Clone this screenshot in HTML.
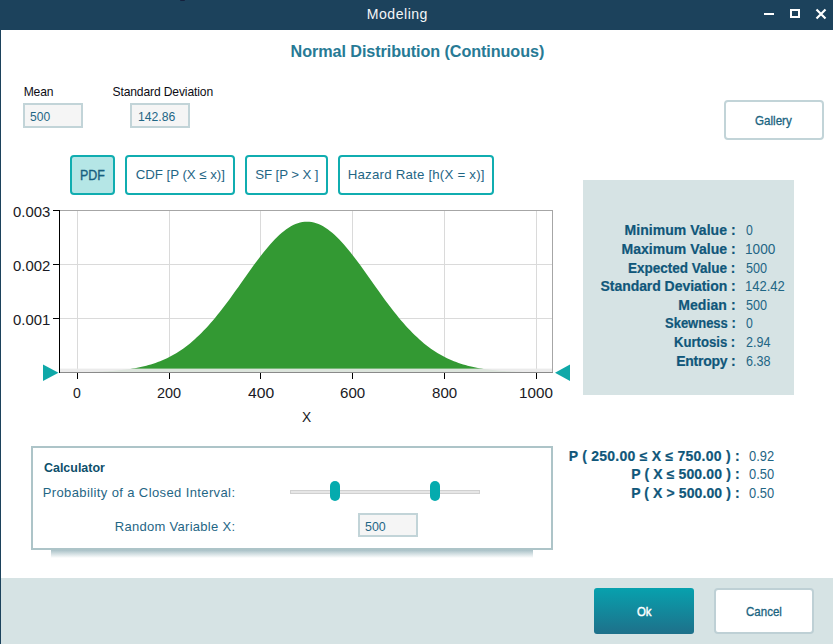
<!DOCTYPE html>
<html><head><meta charset="utf-8"><title>Modeling</title>
<style>
html,body{margin:0;padding:0;}
body{width:833px;height:644px;overflow:hidden;background:#fff;position:relative;font-family:"Liberation Sans",sans-serif;}
.abs{position:absolute;}
.t{position:absolute;white-space:nowrap;line-height:1;}
#titlebar{left:0;top:0;width:833px;height:30px;background:#1c425c;}
#leftborder{left:0;top:0;width:1px;height:644px;background:#1c425c;}
.inp{box-sizing:border-box;border:2px solid #c2d4d8;background:#f5f5f5;height:24px;width:60px;}
.tab{box-sizing:border-box;border:2px solid #10adb0;border-radius:4px;background:#fff;height:40px;top:155px;}
.tab.sel{background:#b5e6e6;}
#gallery{left:724px;top:100px;width:100px;height:40px;box-sizing:border-box;border:2px solid #c2d4d8;border-radius:4px;}
#stats{left:583px;top:180px;width:211px;height:215px;background:#d6e3e4;}
#calc{left:31px;top:446px;width:522px;height:104px;box-sizing:border-box;border:2px solid #adc4c8;background:#fff;}
#calcshadow{left:51px;top:550px;width:482px;height:8px;background:linear-gradient(#a9c1c7,#fff);}
#footer{left:1px;top:578px;width:832px;height:66px;background:#d6e3e4;}
#ok{left:594px;top:588px;width:100px;height:46px;border-radius:3px;background:linear-gradient(#07a1ae,#1e708a);}
#cancel{left:714px;top:588px;width:100px;height:46px;box-sizing:border-box;border:2px solid #bed0d5;border-radius:4px;background:#fff;}
</style></head><body>
<div id="titlebar" class="abs"></div>
<div id="leftborder" class="abs"></div>
<div class="abs" style="left:180px;top:0;width:5px;height:1px;background:#15203c;border-radius:0 0 2px 2px"></div>
<svg class="abs" style="left:760px;top:5px" width="70" height="20" viewBox="760 5 70 20">
<rect x="764" y="13" width="10" height="2" fill="#fff"/>
<rect x="791" y="10" width="8" height="7" fill="none" stroke="#fff" stroke-width="2"/>
<path d="M816.5 9.5 L825.5 18.5 M825.5 9.5 L816.5 18.5" stroke="#fff" stroke-width="2.2" fill="none"/>
</svg>

<div class="abs inp" style="left:23px;top:103px;height:25px"></div>
<div class="abs inp" style="left:130px;top:103px;height:25px"></div>
<div id="gallery" class="abs"></div>
<div class="abs tab sel" style="left:70px;width:45px"></div>
<div class="abs tab" style="left:125px;width:110px"></div>
<div class="abs tab" style="left:245px;width:83px"></div>
<div class="abs tab" style="left:338px;width:156px"></div>

<svg class="abs" style="left:0;top:200px" width="580" height="240" viewBox="0 200 580 240">
<g stroke="#dadada" stroke-width="1" shape-rendering="crispEdges">
<line x1="60" y1="264.5" x2="552" y2="264.5"/><line x1="60" y1="318.5" x2="552" y2="318.5"/>
<line x1="77.5" y1="211" x2="77.5" y2="372"/><line x1="169.5" y1="211" x2="169.5" y2="372"/>
<line x1="260.5" y1="211" x2="260.5" y2="372"/><line x1="352.5" y1="211" x2="352.5" y2="372"/>
<line x1="444.5" y1="211" x2="444.5" y2="372"/><line x1="536.5" y1="211" x2="536.5" y2="372"/>
</g>
<path d="M77.5 372.0 L77.5 372.23 L79.8 372.19 L82.1 372.15 L84.4 372.11 L86.7 372.06 L89.0 372.00 L91.3 371.94 L93.6 371.86 L95.9 371.79 L98.2 371.70 L100.5 371.60 L102.7 371.49 L105.0 371.37 L107.3 371.24 L109.6 371.10 L111.9 370.94 L114.2 370.76 L116.5 370.57 L118.8 370.35 L121.1 370.12 L123.4 369.86 L125.7 369.59 L128.0 369.28 L130.3 368.95 L132.6 368.59 L134.9 368.20 L137.2 367.77 L139.5 367.31 L141.8 366.81 L144.1 366.28 L146.3 365.70 L148.6 365.07 L150.9 364.40 L153.2 363.68 L155.5 362.90 L157.8 362.07 L160.1 361.19 L162.4 360.24 L164.7 359.23 L167.0 358.16 L169.3 357.02 L171.6 355.81 L173.9 354.53 L176.2 353.17 L178.5 351.74 L180.8 350.23 L183.1 348.64 L185.4 346.97 L187.7 345.22 L190.0 343.38 L192.2 341.46 L194.5 339.46 L196.8 337.37 L199.1 335.19 L201.4 332.94 L203.7 330.59 L206.0 328.17 L208.3 325.66 L210.6 323.07 L212.9 320.41 L215.2 317.67 L217.5 314.86 L219.8 311.99 L222.1 309.05 L224.4 306.05 L226.7 303.00 L229.0 299.90 L231.3 296.76 L233.6 293.58 L235.9 290.37 L238.2 287.14 L240.4 283.90 L242.7 280.65 L245.0 277.40 L247.3 274.15 L249.6 270.93 L251.9 267.74 L254.2 264.58 L256.5 261.46 L258.8 258.40 L261.1 255.40 L263.4 252.48 L265.7 249.64 L268.0 246.89 L270.3 244.24 L272.6 241.70 L274.9 239.28 L277.2 236.99 L279.5 234.83 L281.8 232.81 L284.1 230.94 L286.3 229.23 L288.6 227.68 L290.9 226.30 L293.2 225.10 L295.5 224.07 L297.8 223.22 L300.1 222.56 L302.4 222.08 L304.7 221.80 L307.0 221.70 L309.3 221.80 L311.6 222.08 L313.9 222.56 L316.2 223.22 L318.5 224.07 L320.8 225.10 L323.1 226.30 L325.4 227.68 L327.7 229.23 L329.9 230.94 L332.2 232.81 L334.5 234.83 L336.8 236.99 L339.1 239.28 L341.4 241.70 L343.7 244.24 L346.0 246.89 L348.3 249.64 L350.6 252.48 L352.9 255.40 L355.2 258.40 L357.5 261.46 L359.8 264.58 L362.1 267.74 L364.4 270.93 L366.7 274.15 L369.0 277.40 L371.3 280.65 L373.6 283.90 L375.9 287.14 L378.1 290.37 L380.4 293.58 L382.7 296.76 L385.0 299.90 L387.3 303.00 L389.6 306.05 L391.9 309.05 L394.2 311.99 L396.5 314.86 L398.8 317.67 L401.1 320.41 L403.4 323.07 L405.7 325.66 L408.0 328.17 L410.3 330.59 L412.6 332.94 L414.9 335.19 L417.2 337.37 L419.5 339.46 L421.8 341.46 L424.0 343.38 L426.3 345.22 L428.6 346.97 L430.9 348.64 L433.2 350.23 L435.5 351.74 L437.8 353.17 L440.1 354.53 L442.4 355.81 L444.7 357.02 L447.0 358.16 L449.3 359.23 L451.6 360.24 L453.9 361.19 L456.2 362.07 L458.5 362.90 L460.8 363.68 L463.1 364.40 L465.4 365.07 L467.6 365.70 L469.9 366.28 L472.2 366.81 L474.5 367.31 L476.8 367.77 L479.1 368.20 L481.4 368.59 L483.7 368.95 L486.0 369.28 L488.3 369.59 L490.6 369.86 L492.9 370.12 L495.2 370.35 L497.5 370.57 L499.8 370.76 L502.1 370.94 L504.4 371.10 L506.7 371.24 L509.0 371.37 L511.3 371.49 L513.5 371.60 L515.8 371.70 L518.1 371.79 L520.4 371.86 L522.7 371.94 L525.0 372.00 L527.3 372.06 L529.6 372.11 L531.9 372.15 L534.2 372.19 L536.5 372.23 L536.5 372.0 Z" fill="#339933"/>
<rect x="60" y="368.6" width="492" height="3.4" fill="#e9e9e9" fill-opacity="0.93"/>
<g shape-rendering="crispEdges">
<line x1="60" y1="210.5" x2="553" y2="210.5" stroke="#a6a6a6"/>
<line x1="552.5" y1="210" x2="552.5" y2="373" stroke="#a6a6a6"/>
<line x1="60" y1="372.5" x2="553" y2="372.5" stroke="#8a8a8a"/>
<line x1="59.5" y1="210" x2="59.5" y2="373" stroke="#000"/>
<g stroke="#000">
<line x1="53" y1="210.5" x2="60" y2="210.5"/><line x1="53" y1="264.5" x2="60" y2="264.5"/><line x1="53" y1="318.5" x2="60" y2="318.5"/>
<line x1="77.5" y1="373" x2="77.5" y2="379"/><line x1="169.5" y1="373" x2="169.5" y2="379"/><line x1="260.5" y1="373" x2="260.5" y2="379"/>
<line x1="352.5" y1="373" x2="352.5" y2="379"/><line x1="444.5" y1="373" x2="444.5" y2="379"/><line x1="536.5" y1="373" x2="536.5" y2="379"/>
</g></g>
<polygon points="43,364.5 43,381 58.5,372.7" fill="#0fa8a8"/>
<polygon points="570,364.5 570,381 555,372.7" fill="#0fa8a8"/>
</svg>

<div id="stats" class="abs"></div>
<div id="calc" class="abs"></div>
<div id="calcshadow" class="abs"></div>
<div class="abs" style="left:290px;top:490px;width:190px;height:4px;box-sizing:border-box;background:#e6e6e6;border:1px solid #d0d0d0"></div>
<div class="abs" style="left:330px;top:481px;width:10px;height:20px;border-radius:5px;background:#05abae"></div>
<div class="abs" style="left:430px;top:481px;width:10px;height:20px;border-radius:5px;background:#05abae"></div>
<div class="abs inp" style="left:358px;top:513px"></div>
<div id="footer" class="abs"></div>
<div id="ok" class="abs"></div>
<div id="cancel" class="abs"></div>
<div class="t" style="left:366.80px;top:6.86px;font-size:14.10px;color:#f4f6f8;letter-spacing:0.492px">Modeling</div>
<div class="t" style="left:290.60px;top:43.09px;font-size:16.20px;font-weight:bold;color:#277a95;letter-spacing:-0.083px">Normal Distribution (Continuous)</div>
<div class="t" style="left:23.70px;top:85.56px;font-size:12.10px;color:#0c0c14;letter-spacing:-0.142px">Mean</div>
<div class="t" style="left:112.50px;top:85.56px;font-size:12.10px;color:#0c0c14;letter-spacing:-0.132px">Standard Deviation</div>
<div class="t" style="left:30.40px;top:110.00px;font-size:13.00px;transform:scaleX(0.9273);transform-origin:0 0;color:#1f6685;letter-spacing:0.000px">500</div>
<div class="t" style="left:137.80px;top:110.00px;font-size:13.00px;transform:scaleX(0.9385);transform-origin:0 0;color:#1f6685;letter-spacing:0.000px">142.86</div>
<div class="t" style="left:79.72px;top:167.68px;font-size:14.20px;-webkit-text-stroke:0.35px #17607f;transform:scaleX(0.8770);transform-origin:0 0;color:#17607f;letter-spacing:0.000px">PDF</div>
<div class="t" style="left:135.70px;top:168.44px;font-size:13.30px;color:#1f6685;letter-spacing:-0.038px">CDF [P (X ≤ x)]</div>
<div class="t" style="left:255.20px;top:168.44px;font-size:13.30px;color:#1f6685;letter-spacing:-0.107px">SF [P &gt; X ]</div>
<div class="t" style="left:347.70px;top:168.44px;font-size:13.30px;color:#1f6685;letter-spacing:0.197px">Hazard Rate [h(X = x)]</div>
<div class="t" style="left:755.10px;top:115.20px;font-size:12.40px;-webkit-text-stroke:0.30px #1a6480;transform:scaleX(0.9363);transform-origin:0 0;color:#1a6480;letter-spacing:0.000px">Gallery</div>
<div class="t" style="left:13.40px;top:203.86px;font-size:15.40px;transform:scaleX(0.9669);transform-origin:0 0;color:#1a1a24;letter-spacing:0.000px">0.003</div>
<div class="t" style="left:13.40px;top:257.86px;font-size:15.40px;transform:scaleX(0.9669);transform-origin:0 0;color:#1a1a24;letter-spacing:0.000px">0.002</div>
<div class="t" style="left:13.40px;top:311.86px;font-size:15.40px;transform:scaleX(0.9669);transform-origin:0 0;color:#1a1a24;letter-spacing:0.000px">0.001</div>
<div class="t" style="left:73.35px;top:384.96px;font-size:15.40px;transform:scaleX(0.9125);transform-origin:0 0;color:#1a1a24;letter-spacing:0.000px">0</div>
<div class="t" style="left:157.20px;top:384.96px;font-size:15.40px;transform:scaleX(0.9395);transform-origin:0 0;color:#1a1a24;letter-spacing:0.000px">200</div>
<div class="t" style="left:247.80px;top:384.96px;font-size:15.40px;transform:scaleX(1.0191);transform-origin:0 0;color:#1a1a24;letter-spacing:0.000px">400</div>
<div class="t" style="left:340.00px;top:384.96px;font-size:15.40px;transform:scaleX(0.9793);transform-origin:0 0;color:#1a1a24;letter-spacing:0.000px">600</div>
<div class="t" style="left:431.90px;top:384.96px;font-size:15.40px;transform:scaleX(0.9793);transform-origin:0 0;color:#1a1a24;letter-spacing:0.000px">800</div>
<div class="t" style="left:518.86px;top:384.96px;font-size:15.40px;transform:scaleX(0.9884);transform-origin:0 0;color:#1a1a24;letter-spacing:0.000px">1000</div>
<div class="t" style="left:302.20px;top:409.45px;font-size:15.30px;transform:scaleX(0.9000);transform-origin:0 0;color:#1a1a24;letter-spacing:0.000px">X</div>
<div class="t" style="left:624.50px;top:223.15px;font-size:14.00px;font-weight:bold;-webkit-text-stroke:0.20px #10577a;color:#10577a;letter-spacing:0.050px">Minimum Value :</div>
<div class="t" style="left:745.60px;top:223.15px;font-size:14.00px;transform:scaleX(0.8750);transform-origin:0 0;color:#1f6685;letter-spacing:0.000px">0</div>
<div class="t" style="left:621.50px;top:241.75px;font-size:14.00px;font-weight:bold;-webkit-text-stroke:0.20px #10577a;color:#10577a;letter-spacing:0.041px">Maximum Value :</div>
<div class="t" style="left:744.63px;top:241.75px;font-size:14.00px;transform:scaleX(0.9717);transform-origin:0 0;color:#1f6685;letter-spacing:0.000px">1000</div>
<div class="t" style="left:628.30px;top:260.85px;font-size:14.00px;font-weight:bold;-webkit-text-stroke:0.20px #10577a;transform:scaleX(0.9647);transform-origin:0 0;color:#10577a;letter-spacing:0.000px">Expected Value :</div>
<div class="t" style="left:745.60px;top:260.85px;font-size:14.00px;transform:scaleX(0.9036);transform-origin:0 0;color:#1f6685;letter-spacing:0.000px">500</div>
<div class="t" style="left:600.50px;top:279.25px;font-size:14.00px;font-weight:bold;-webkit-text-stroke:0.20px #10577a;color:#10577a;letter-spacing:-0.051px">Standard Deviation :</div>
<div class="t" style="left:744.67px;top:279.25px;font-size:14.00px;transform:scaleX(0.9302);transform-origin:0 0;color:#1f6685;letter-spacing:0.000px">142.42</div>
<div class="t" style="left:678.20px;top:298.05px;font-size:14.00px;font-weight:bold;-webkit-text-stroke:0.20px #10577a;color:#10577a;letter-spacing:0.098px">Median :</div>
<div class="t" style="left:745.60px;top:298.05px;font-size:14.00px;transform:scaleX(0.9036);transform-origin:0 0;color:#1f6685;letter-spacing:0.000px">500</div>
<div class="t" style="left:664.90px;top:316.35px;font-size:14.00px;font-weight:bold;-webkit-text-stroke:0.20px #10577a;transform:scaleX(0.9273);transform-origin:0 0;color:#10577a;letter-spacing:0.000px">Skewness :</div>
<div class="t" style="left:745.60px;top:316.35px;font-size:14.00px;transform:scaleX(0.8750);transform-origin:0 0;color:#1f6685;letter-spacing:0.000px">0</div>
<div class="t" style="left:674.40px;top:335.15px;font-size:14.00px;font-weight:bold;-webkit-text-stroke:0.20px #10577a;transform:scaleX(0.9370);transform-origin:0 0;color:#10577a;letter-spacing:0.000px">Kurtosis :</div>
<div class="t" style="left:745.60px;top:335.15px;font-size:14.00px;transform:scaleX(0.8994);transform-origin:0 0;color:#1f6685;letter-spacing:0.000px">2.94</div>
<div class="t" style="left:676.20px;top:353.65px;font-size:14.00px;font-weight:bold;-webkit-text-stroke:0.20px #10577a;color:#10577a;letter-spacing:-0.247px">Entropy :</div>
<div class="t" style="left:745.60px;top:353.65px;font-size:14.00px;transform:scaleX(0.8994);transform-origin:0 0;color:#1f6685;letter-spacing:0.000px">6.38</div>
<div class="t" style="left:43.50px;top:460.60px;font-size:13.00px;font-weight:bold;transform:scaleX(0.9573);transform-origin:0 0;color:#0d4f6b;letter-spacing:0.000px">Calculator</div>
<div class="t" style="left:42.70px;top:485.60px;font-size:13.00px;color:#1f6685;letter-spacing:0.387px">Probability of a Closed Interval:</div>
<div class="t" style="left:114.80px;top:519.50px;font-size:13.00px;color:#1f6685;letter-spacing:0.285px">Random Variable X:</div>
<div class="t" style="left:364.70px;top:520.00px;font-size:13.00px;transform:scaleX(0.9553);transform-origin:0 0;color:#1f6685;letter-spacing:0.000px">500</div>
<div class="t" style="left:568.80px;top:449.15px;font-size:14.00px;font-weight:bold;-webkit-text-stroke:0.20px #10577a;color:#10577a;letter-spacing:0.241px">P ( 250.00 ≤ X ≤ 750.00 ) :</div>
<div class="t" style="left:631.20px;top:467.15px;font-size:14.00px;font-weight:bold;-webkit-text-stroke:0.20px #10577a;color:#10577a;letter-spacing:0.127px">P ( X ≤ 500.00 ) :</div>
<div class="t" style="left:631.20px;top:485.75px;font-size:14.00px;font-weight:bold;-webkit-text-stroke:0.20px #10577a;color:#10577a;letter-spacing:0.098px">P ( X &gt; 500.00 ) :</div>
<div class="t" style="left:749.30px;top:449.15px;font-size:14.00px;transform:scaleX(0.9213);transform-origin:0 0;color:#1f6685;letter-spacing:0.000px">0.92</div>
<div class="t" style="left:749.30px;top:467.15px;font-size:14.00px;transform:scaleX(0.9213);transform-origin:0 0;color:#1f6685;letter-spacing:0.000px">0.50</div>
<div class="t" style="left:749.30px;top:485.75px;font-size:14.00px;transform:scaleX(0.9213);transform-origin:0 0;color:#1f6685;letter-spacing:0.000px">0.50</div>
<div class="t" style="left:636.60px;top:605.97px;font-size:12.20px;-webkit-text-stroke:0.45px #ffffff;transform:scaleX(0.9345);transform-origin:0 0;color:#ffffff;letter-spacing:0.000px">Ok</div>
<div class="t" style="left:746.40px;top:606.06px;font-size:12.10px;-webkit-text-stroke:0.30px #1a6480;transform:scaleX(0.9524);transform-origin:0 0;color:#1a6480;letter-spacing:0.000px">Cancel</div>

</body></html>
